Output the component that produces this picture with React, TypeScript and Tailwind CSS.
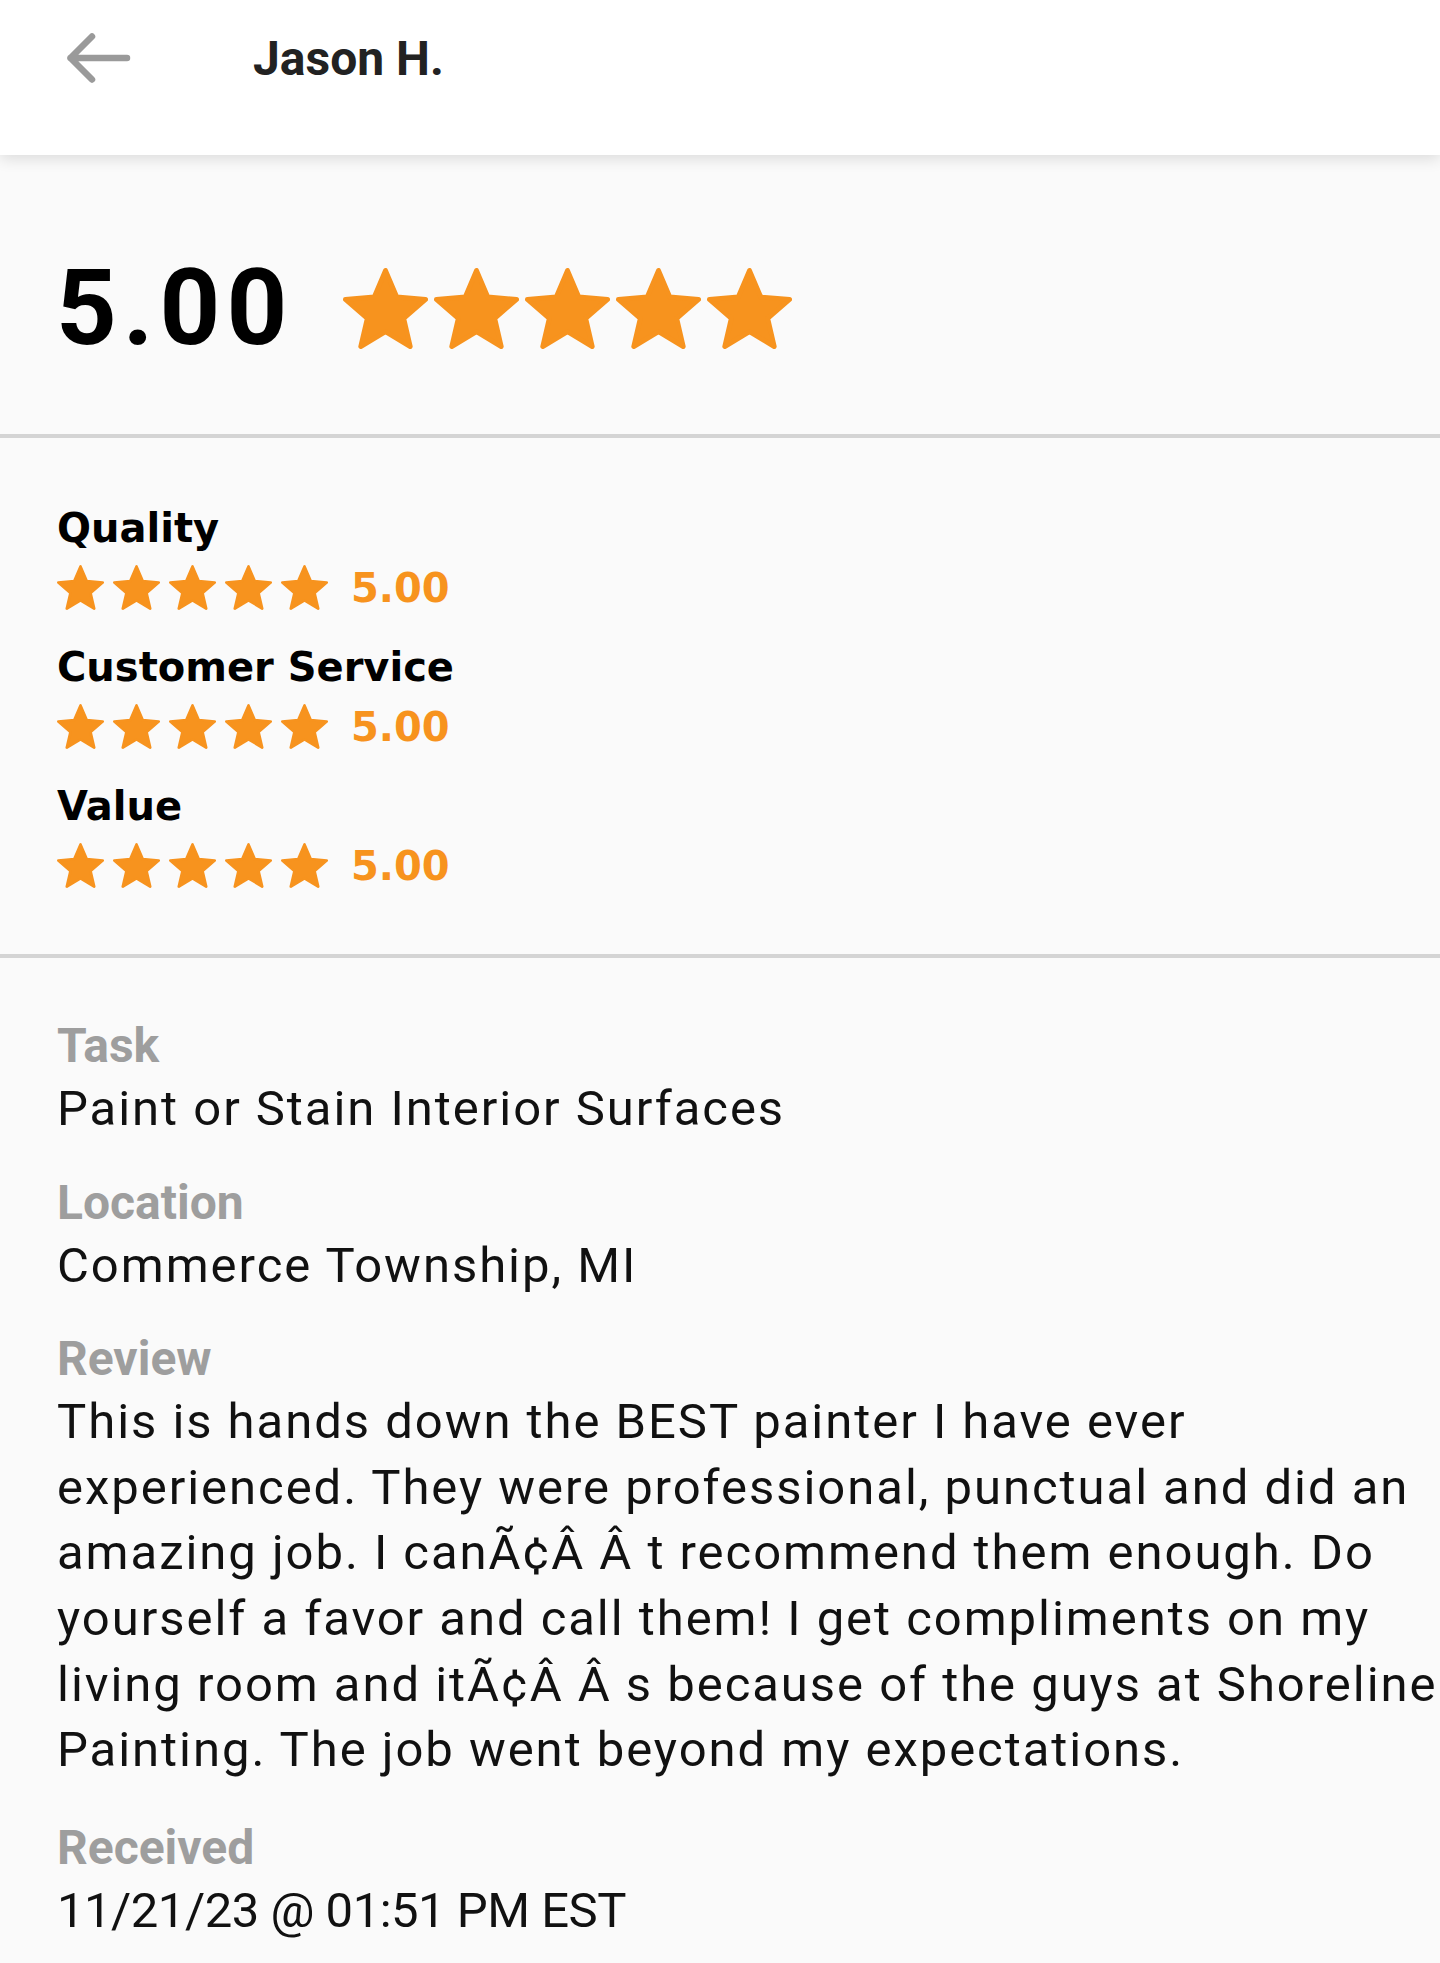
import React from "react";

const ORANGE = "#f7931e";

function Star({ className }: { className?: string }) {
  return (
    <svg viewBox="1.4 1.4 21.2 20.2" className={className} fill="currentColor">
      <path
        d="M12 17.27L18.18 21l-1.64-7.03L22 9.24l-7.19-.61L12 2 9.19 8.63 2 9.24l5.46 4.73L5.82 21z"
        stroke="currentColor"
        strokeWidth="1.2"
        strokeLinejoin="round"
      />
    </svg>
  );
}

function Stars({ size }: { size: "lg" | "sm" }) {
  const big = size === "lg";
  return (
    <div className={big ? "flex gap-[6px]" : "flex gap-[9px]"}>
      {[0, 1, 2, 3, 4].map((i) => (
        <Star
          key={i}
          className={big ? "h-[81px] w-[85px] text-[#f7931e]" : "h-[45px] w-[47px] text-[#f7931e]"}
        />
      ))}
    </div>
  );
}

const categories = ["Quality", "Customer Service", "Value"];

// review copy keeps the broken encoding the app shows
const reviewLines = [
  "This is hands down the BEST painter I have ever",
  "experienced. They were professional, punctual and did an",
  "amazing job. I can\u00c3\u00a2\u00c2\u00a0\u00c2\u00a0t recommend them enough. Do",
  "yourself a favor and call them! I get compliments on my",
  "living room and it\u00c3\u00a2\u00c2\u00a0\u00c2\u00a0s because of the guys at Shoreline",
  "Painting. The job went beyond my expectations.",
];

function Detail({ label, children, className }: { label: string; children: React.ReactNode; className?: string }) {
  return (
    <div className={className}>
      <div className="text-[48px] font-bold leading-[56px] text-[#9e9e9e]">{label}</div>
      <div className="mt-[2px] text-[49px] leading-[65.6px] text-[#111]">{children}</div>
    </div>
  );
}

export default function App() {
  return (
    <div className="min-h-[1963px] bg-[#fafafa] font-['Roboto',sans-serif]">
      {/* header */}
      <header className="relative z-10 h-[155px] bg-white shadow-[0_4px_14px_rgba(0,0,0,0.12)]">
        <div className="flex h-[118px] items-center">
          <button className="ml-[62px] flex h-[56px] w-[72px] items-center text-[#9a9a9a]">
            <svg viewBox="0 0 72 56" className="h-[56px] w-[72px]" fill="none">
              <path
                d="M65 27H8.5M30 5.5L8.5 27L30 48.5"
                stroke="currentColor"
                strokeWidth="6.5"
                strokeLinecap="round"
                strokeLinejoin="round"
              />
            </svg>
          </button>
          <h1 className="ml-[119px] text-[48px] font-bold leading-none text-[#222]">
            Jason H.
          </h1>
        </div>
      </header>

      {/* overall */}
      <section className="flex items-center pb-[81px] pl-[56px] pt-[108px]">
        <div className="flex h-[90px] items-center gap-[50px]">
          <span className="text-[106px] font-bold leading-none tracking-[6px] text-black">
            5.00
          </span>
          <Stars size="lg" />
        </div>
      </section>
      <div className="h-[4px] bg-[#d4d4d4]" />

      {/* categories */}
      <section className="flex flex-col gap-[33px] px-[57px] py-[66px] font-['DejaVu_Sans',sans-serif]">
        {categories.map((c) => (
          <div key={c}>
            <div className="text-[40px] font-bold leading-[48px] text-black">{c}</div>
            <div className="mt-[13px] flex h-[45px] items-center gap-[23px]">
              <Stars size="sm" />
              <span className="text-[40px] font-bold leading-none" style={{ color: ORANGE }}>
                5.00
              </span>
            </div>
          </div>
        ))}
      </section>
      <div className="h-[4px] bg-[#d4d4d4]" />

      {/* details */}
      <section className="flex flex-col gap-[33px] pb-[20px] pl-[57px] pt-[60px]">
        <Detail label="Task">
          <p className="tracking-[0.04em]">Paint or Stain Interior Surfaces</p>
        </Detail>
        <Detail label="Location">
          <p className="tracking-[0.04em]">Commerce Township, MI</p>
        </Detail>
        <Detail label="Review" className="mb-[4px]">
          {reviewLines.map((line, i) => (
            <p key={i} className="whitespace-nowrap tracking-[0.04em]">
              {line}
            </p>
          ))}
        </Detail>
        <Detail label="Received">
          <p className="tracking-[-0.01em]">11/21/23 @ 01:51 PM EST</p>
        </Detail>
      </section>
    </div>
  );
}
